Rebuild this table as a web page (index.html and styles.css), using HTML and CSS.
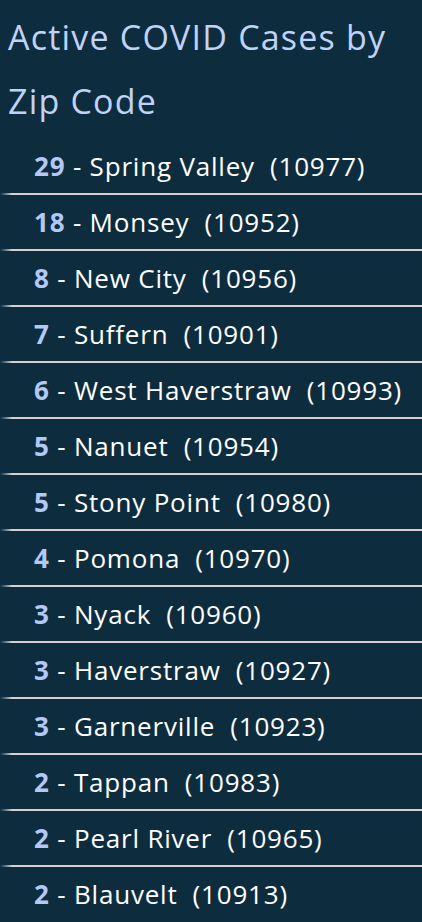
FILE: index.html
```html
<!DOCTYPE html>
<html>
<head>
<meta charset="utf-8">
<link rel="stylesheet" href="styles.css">
</head>
<body>
<h1 class="title">Active COVID Cases by Zip Code</h1>
<ul class="list">
  <li class="row"><b class="num">29</b> - Spring Valley&nbsp; (10977)</li>
  <li class="row"><b class="num">18</b> - Monsey&nbsp; (10952)</li>
  <li class="row"><b class="num">8</b> - New City&nbsp; (10956)</li>
  <li class="row"><b class="num">7</b> - Suffern&nbsp; (10901)</li>
  <li class="row"><b class="num">6</b> - West Haverstraw&nbsp; (10993)</li>
  <li class="row"><b class="num">5</b> - Nanuet&nbsp; (10954)</li>
  <li class="row"><b class="num">5</b> - Stony Point&nbsp; (10980)</li>
  <li class="row"><b class="num">4</b> - Pomona&nbsp; (10970)</li>
  <li class="row"><b class="num">3</b> - Nyack&nbsp; (10960)</li>
  <li class="row"><b class="num">3</b> - Haverstraw&nbsp; (10927)</li>
  <li class="row"><b class="num">3</b> - Garnerville&nbsp; (10923)</li>
  <li class="row"><b class="num">2</b> - Tappan&nbsp; (10983)</li>
  <li class="row"><b class="num">2</b> - Pearl River&nbsp; (10965)</li>
  <li class="row last"><b class="num">2</b> - Blauvelt&nbsp; (10913)</li>
</ul>
</body>
</html>
```
FILE: styles.css
```css
html, body {
  margin: 0;
  padding: 0;
  background: #0d2d3e;
  height: 100%;
  overflow: hidden;
}
body {
  font-family: "Open Sans", Lato, sans-serif;
}
.title {
  margin: 5px 0 6px;
  padding: 0 8px;
  font-size: 34px;
  letter-spacing: 1.2px;
  line-height: 64px;
  font-weight: 400;
  color: #c0d3f6;
}
.list {
  list-style: none;
  margin: 0;
  padding: 0;
}
.row {
  position: relative;
  height: 56px;
  box-sizing: border-box;
  padding: 0 0 2px 34px;
  font-size: 26px;
  letter-spacing: 0.8px;
  line-height: 54px;
  color: #ffffff;
  white-space: pre;
}
.row::after {
  content: "";
  position: absolute;
  left: 0;
  right: 0;
  bottom: 0;
  height: 2px;
  background: linear-gradient(to right, rgba(210,210,210,0) 0, #d2d2d2 12px);
}
.row.last::after {
  display: none;
}
.num {
  color: #b3c8f5;
  font-weight: 700;
}
```
